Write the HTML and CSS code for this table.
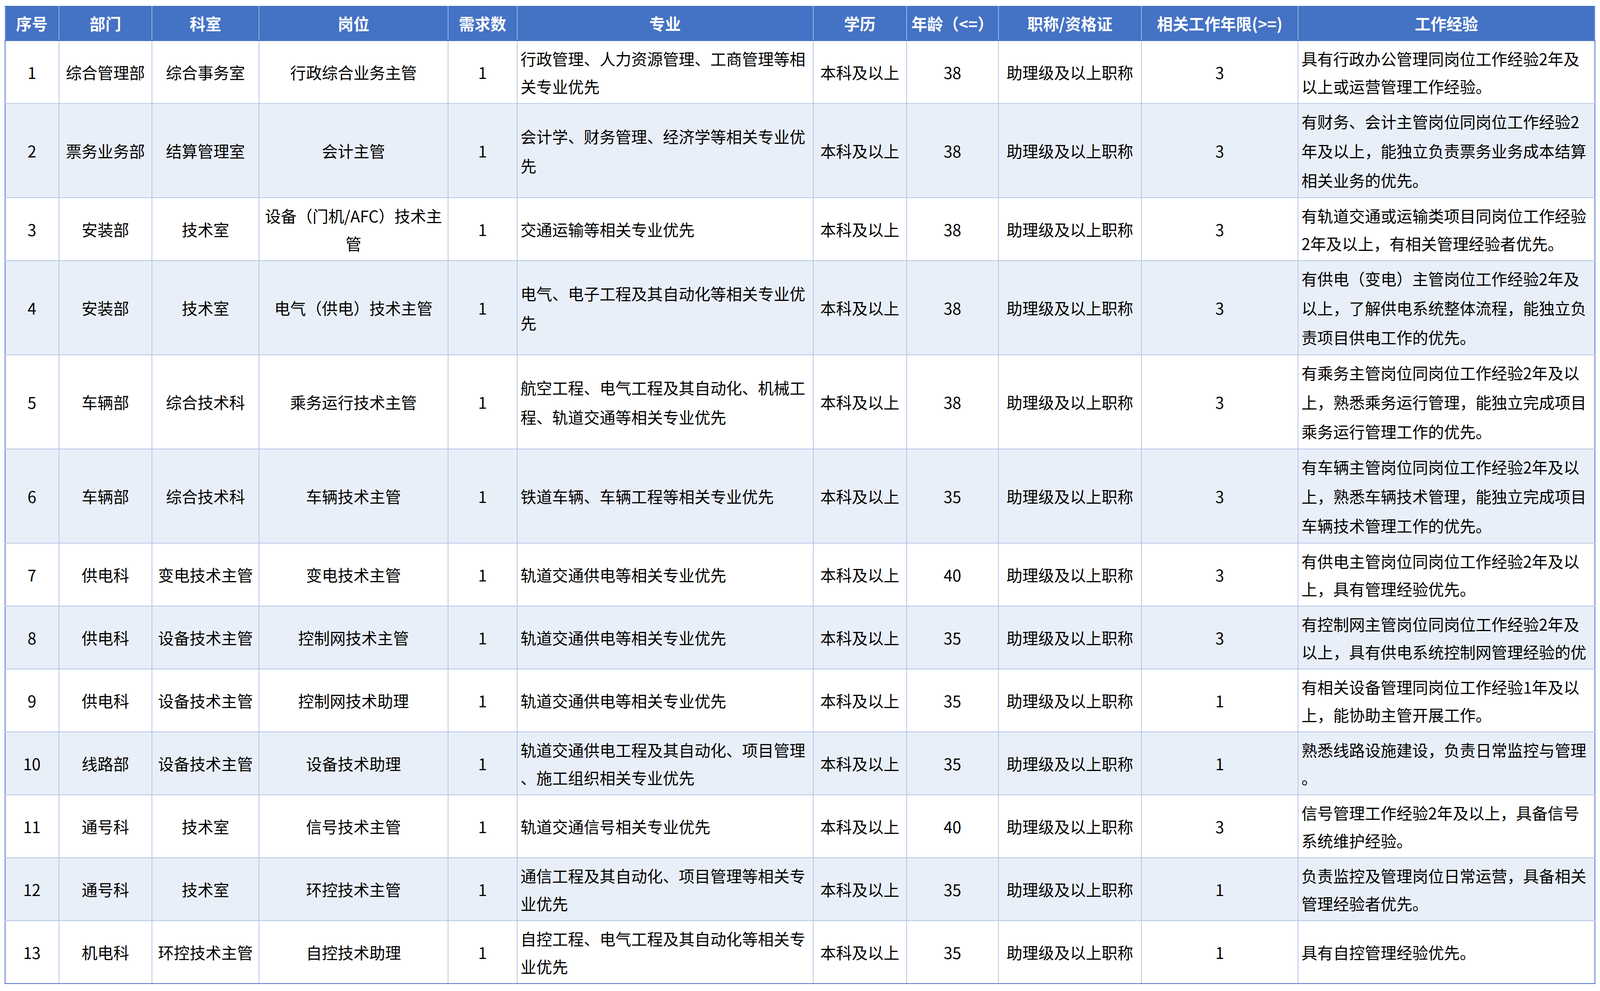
FILE: index.html
```html
<!DOCTYPE html>
<html lang="zh-CN">
<head>
<meta charset="utf-8">
<title>招聘岗位表</title>
<link rel="stylesheet" href="styles.css">
</head>
<body>
<table class="jobs">
  <colgroup>
    <col class="c-no"><col class="c-dept"><col class="c-office"><col class="c-post"><col class="c-num">
    <col class="c-major"><col class="c-edu"><col class="c-age"><col class="c-title"><col class="c-years"><col class="c-exp">
  </colgroup>
  <thead>
    <tr>
      <th>序号</th><th>部门</th><th>科室</th><th>岗位</th><th>需求数</th><th>专业</th><th>学历</th><th>年龄（&lt;=）</th><th>职称/资格证</th><th>相关工作年限(&gt;=)</th><th>工作经验</th>
    </tr>
  </thead>
  <tbody>
    <tr class="short">
      <td>1</td><td>综合管理部</td><td>综合事务室</td><td>行政综合业务主管</td><td>1</td>
      <td class="left">行政管理、人力资源管理、工商管理等相<br>关专业优先</td>
      <td>本科及以上</td><td>38</td><td>助理级及以上职称</td><td>3</td>
      <td class="left">具有行政办公管理同岗位工作经验2年及<br>以上或运营管理工作经验。</td>
    </tr>
    <tr class="tall">
      <td>2</td><td>票务业务部</td><td>结算管理室</td><td>会计主管</td><td>1</td>
      <td class="left">会计学、财务管理、经济学等相关专业优<br>先</td>
      <td>本科及以上</td><td>38</td><td>助理级及以上职称</td><td>3</td>
      <td class="left">有财务、会计主管岗位同岗位工作经验2<br>年及以上，能独立负责票务业务成本结算<br>相关业务的优先。</td>
    </tr>
    <tr class="short">
      <td>3</td><td>安装部</td><td>技术室</td><td>设备（门机/AFC）技术主<br>管</td><td>1</td>
      <td class="left">交通运输等相关专业优先</td>
      <td>本科及以上</td><td>38</td><td>助理级及以上职称</td><td>3</td>
      <td class="left">有轨道交通或运输类项目同岗位工作经验<br>2年及以上，有相关管理经验者优先。</td>
    </tr>
    <tr class="tall">
      <td>4</td><td>安装部</td><td>技术室</td><td>电气（供电）技术主管</td><td>1</td>
      <td class="left">电气、电子工程及其自动化等相关专业优<br>先</td>
      <td>本科及以上</td><td>38</td><td>助理级及以上职称</td><td>3</td>
      <td class="left">有供电（变电）主管岗位工作经验2年及<br>以上，了解供电系统整体流程，能独立负<br>责项目供电工作的优先。</td>
    </tr>
    <tr class="tall">
      <td>5</td><td>车辆部</td><td>综合技术科</td><td>乘务运行技术主管</td><td>1</td>
      <td class="left">航空工程、电气工程及其自动化、机械工<br>程、轨道交通等相关专业优先</td>
      <td>本科及以上</td><td>38</td><td>助理级及以上职称</td><td>3</td>
      <td class="left">有乘务主管岗位同岗位工作经验2年及以<br>上，熟悉乘务运行管理，能独立完成项目<br>乘务运行管理工作的优先。</td>
    </tr>
    <tr class="tall">
      <td>6</td><td>车辆部</td><td>综合技术科</td><td>车辆技术主管</td><td>1</td>
      <td class="left">铁道车辆、车辆工程等相关专业优先</td>
      <td>本科及以上</td><td>35</td><td>助理级及以上职称</td><td>3</td>
      <td class="left">有车辆主管岗位同岗位工作经验2年及以<br>上，熟悉车辆技术管理，能独立完成项目<br>车辆技术管理工作的优先。</td>
    </tr>
    <tr class="short">
      <td>7</td><td>供电科</td><td>变电技术主管</td><td>变电技术主管</td><td>1</td>
      <td class="left">轨道交通供电等相关专业优先</td>
      <td>本科及以上</td><td>40</td><td>助理级及以上职称</td><td>3</td>
      <td class="left">有供电主管岗位同岗位工作经验2年及以<br>上，具有管理经验优先。</td>
    </tr>
    <tr class="short">
      <td>8</td><td>供电科</td><td>设备技术主管</td><td>控制网技术主管</td><td>1</td>
      <td class="left">轨道交通供电等相关专业优先</td>
      <td>本科及以上</td><td>35</td><td>助理级及以上职称</td><td>3</td>
      <td class="left">有控制网主管岗位同岗位工作经验2年及<br>以上，具有供电系统控制网管理经验的优</td>
    </tr>
    <tr class="short">
      <td>9</td><td>供电科</td><td>设备技术主管</td><td>控制网技术助理</td><td>1</td>
      <td class="left">轨道交通供电等相关专业优先</td>
      <td>本科及以上</td><td>35</td><td>助理级及以上职称</td><td>1</td>
      <td class="left">有相关设备管理同岗位工作经验1年及以<br>上，能协助主管开展工作。</td>
    </tr>
    <tr class="short">
      <td>10</td><td>线路部</td><td>设备技术主管</td><td>设备技术助理</td><td>1</td>
      <td class="left">轨道交通供电工程及其自动化、项目管理<br>、施工组织相关专业优先</td>
      <td>本科及以上</td><td>35</td><td>助理级及以上职称</td><td>1</td>
      <td class="left">熟悉线路设施建设，负责日常监控与管理<br>。</td>
    </tr>
    <tr class="short">
      <td>11</td><td>通号科</td><td>技术室</td><td>信号技术主管</td><td>1</td>
      <td class="left">轨道交通信号相关专业优先</td>
      <td>本科及以上</td><td>40</td><td>助理级及以上职称</td><td>3</td>
      <td class="left">信号管理工作经验2年及以上，具备信号<br>系统维护经验。</td>
    </tr>
    <tr class="short">
      <td>12</td><td>通号科</td><td>技术室</td><td>环控技术主管</td><td>1</td>
      <td class="left">通信工程及其自动化、项目管理等相关专<br>业优先</td>
      <td>本科及以上</td><td>35</td><td>助理级及以上职称</td><td>1</td>
      <td class="left">负责监控及管理岗位日常运营，具备相关<br>管理经验者优先。</td>
    </tr>
    <tr class="short">
      <td>13</td><td>机电科</td><td>环控技术主管</td><td>自控技术助理</td><td>1</td>
      <td class="left">自控工程、电气工程及其自动化等相关专<br>业优先</td>
      <td>本科及以上</td><td>35</td><td>助理级及以上职称</td><td>1</td>
      <td class="left">具有自控管理经验优先。</td>
    </tr>
  </tbody>
</table>
</body>
</html>
```

FILE: styles.css
```css
:root {
  /* design units: the layout is drawn on a 5256 x 2536 canvas */
  --u: calc(100vw / 5256);
  --v: calc(100vh / 2536);
}

html, body {
  margin: 0;
  padding: 0;
  background: #ffffff;
  overflow: hidden;
}

body {
  padding: calc(15 * var(--v)) 0 0 calc(15 * var(--u));
  font-family: "Noto Sans CJK SC", "Noto Sans", "Liberation Sans", sans-serif;
  color: #000000;
}

.jobs {
  border-collapse: collapse;
  table-layout: fixed;
  width: calc(5225 * var(--u));
  font-size: calc(52 * var(--u));
  border: 2px solid #4a72c2;
}

.c-no { width: 3.388%; }
.c-dept { width: 5.857%; }
.c-office { width: 6.737%; }
.c-post { width: 11.885%; }
.c-num { width: 4.345%; }
.c-major { width: 18.622%; }
.c-edu { width: 5.876%; }
.c-age { width: 5.780%; }
.c-title { width: 8.995%; }
.c-years { width: 9.856%; }
.c-exp { width: 18.659%; }

.jobs th {
  height: calc(86 * var(--v));
  padding: 0;
  background: #4472c4;
  color: #ffffff;
  font-weight: 700;
  text-align: center;
  vertical-align: middle;
  white-space: nowrap;
  line-height: calc(70 * var(--v));
  border-left: 2px solid #9db3e0;
  border-right: 2px solid #9db3e0;
  border-top: 2px solid #4472c4;
  border-bottom: 2px solid #4472c4;
  overflow: hidden;
}

.jobs td {
  padding: 0 calc(10 * var(--u));
  text-align: center;
  vertical-align: middle;
  white-space: nowrap;
  overflow: hidden;
  border: 2px solid #b4c6e7;
}

.jobs td.left {
  text-align: left;
}

.jobs tr.short td {
  height: calc(159 * var(--v));
  line-height: calc(71 * var(--v));
}

.jobs tr.tall td {
  height: calc(239 * var(--v));
  line-height: calc(75 * var(--v));
}

.jobs tbody tr:nth-child(even) td {
  background: #e9eff9;
}

.jobs tbody tr td:first-child {
  border-left: 2px solid #4a72c2;
}

.jobs tbody tr td:last-child {
  border-right: 2px solid #4a72c2;
}

.jobs tbody tr:last-child td {
  border-bottom: 2px solid #4a72c2;
}
```
